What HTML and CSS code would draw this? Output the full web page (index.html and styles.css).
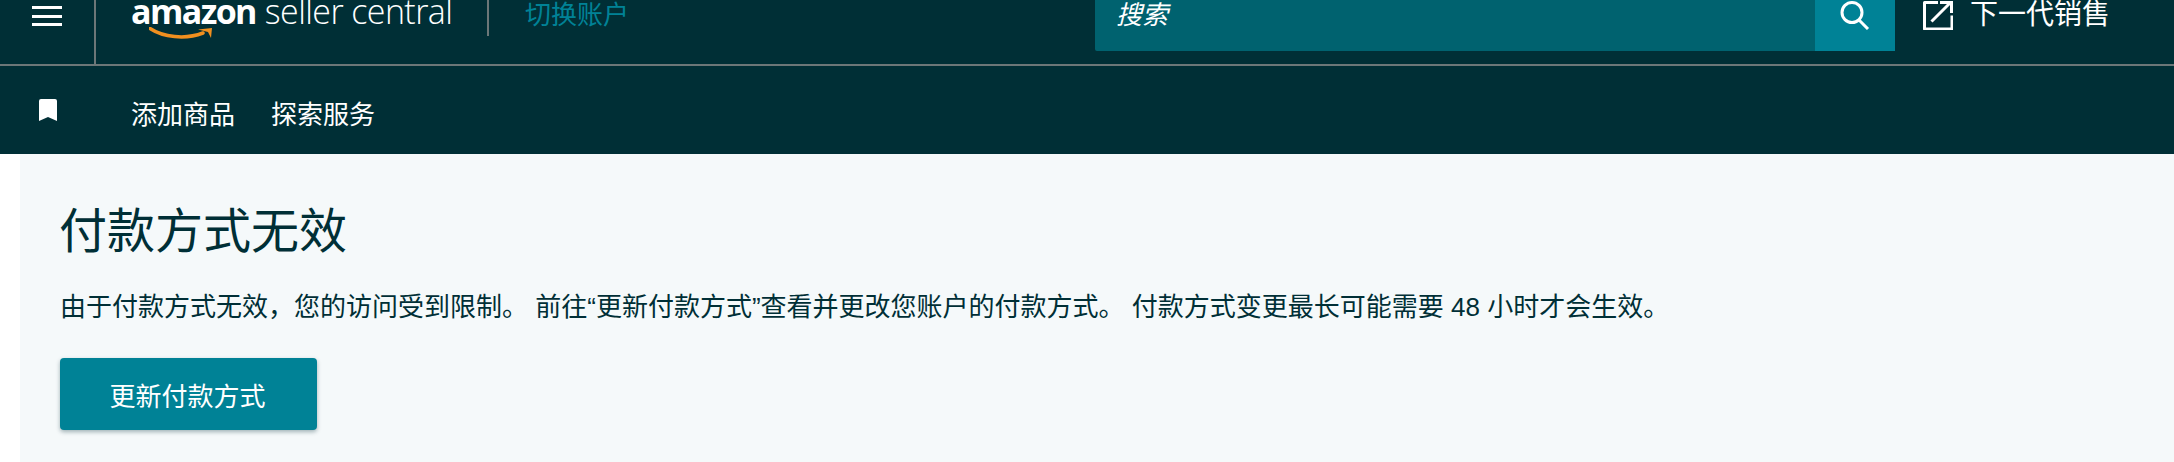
FILE: index.html
```html
<!DOCTYPE html>
<html lang="zh-CN">
<head>
  <title>付款方式无效</title>
  <meta name="viewport" content="width=device-width, initial-scale=1.0">
  <link rel="stylesheet" href="styles.css">
</head>
<body>
  <header class="top-nav">
    <div class="menu-cell">
      <div class="hamburger"><span></span><span></span><span></span></div>
    </div>
    <div class="logo">
      <span class="logo-amazon">amazon</span>
      <span class="logo-seller">seller central</span>
      <svg class="logo-smile" viewBox="0 0 66 14" width="66" height="14">
        <path d="M1 1.500C14 10 36 13 54 6" fill="none" stroke="#f08f1f" stroke-width="3.500" stroke-linecap="round"/>
        <path d="M49 2.500L63 1L62 11L59 5Z" fill="#f08f1f"/>
      </svg>
    </div>
    <div class="switch-account"><a href="#">切换账户</a></div>
    <div class="search-wrap">
      <div class="search-box">搜索</div>
      <button class="search-btn">
        <svg viewBox="0 0 30 30" width="30" height="30">
          <circle cx="12" cy="12.500" r="10" fill="none" stroke="#fff" stroke-width="3"/>
          <path d="M19 20L28 29" fill="none" stroke="#fff" stroke-width="3"/>
        </svg>
      </button>
    </div>
    <a class="next-gen" href="#">
      <svg viewBox="0 0 30 30" width="30" height="30">
        <path d="M15 2.500H1.500V29H29V15.500" fill="none" stroke="#fff" stroke-width="3" stroke-linejoin="round"/>
        <path d="M8.500 21.500L27.500 2.500" fill="none" stroke="#fff" stroke-width="3"/>
        <path d="M17 2.500H28.500V13" fill="none" stroke="#fff" stroke-width="3"/>
      </svg>
      <span>下一代销售</span>
    </a>
  </header>

  <nav class="sub-nav">
    <svg class="bookmark" viewBox="0 0 18 22" width="18" height="22">
      <path d="M2 0H16A2 2 0 0 1 18 2V22L9 18L0 22V2A2 2 0 0 1 2 0Z" fill="#fff"/>
    </svg>
    <a href="#">添加商品</a>
    <a href="#">探索服务</a>
  </nav>

  <main class="content">
    <h1>付款方式无效</h1>
    <p>由于付款方式无效，您的访问受到限制。 前往“更新付款方式”查看并更改您账户的付款方式。 付款方式变更最长可能需要 48 小时才会生效。</p>
    <button class="update-btn">更新付款方式</button>
  </main>
</body>
</html>
```

FILE: styles.css
```css
:root {
  --nav-bg: #002f36;
  --teal: #008296;
  --page-bg: #f5f9fa;
  --divider: #6c7778;
}

* {
  margin: 0;
  padding: 0;
  box-sizing: border-box;
}

body {
  font-family: "Liberation Sans", "Noto Sans CJK SC", sans-serif;
  background: #fff;
  color: var(--nav-bg);
  height: 462px;
  overflow: hidden;
}

a {
  color: inherit;
  text-decoration: none;
}

button {
  font: inherit;
  border: 0;
  cursor: pointer;
}

.top-nav {
  display: flex;
  height: 66px;
  background: var(--nav-bg);
  border-bottom: 2px solid var(--divider);
  color: #fff;
}

.menu-cell {
  width: 96px;
  height: 64px;
  padding: 6px 0 0 32px;
  border-right: 2px solid var(--divider);
}

.hamburger {
  display: flex;
  flex-direction: column;
  justify-content: space-between;
  width: 30px;
  height: 20px;
}

.hamburger span {
  height: 3px;
  background: #fff;
}

.logo {
  position: relative;
  display: flex;
  gap: 9px;
  align-items: baseline;
  width: 356px;
  margin-left: 35px;
  height: 28px;
  font-family: "Open Sans", sans-serif;
  line-height: 23px;
  white-space: nowrap;
}

.logo-amazon {
  font-size: 34px;
  font-weight: 700;
  letter-spacing: -1.6px;
}

.logo-seller {
  font-size: 34px;
  font-weight: 300;
  letter-spacing: -0.6px;
}

.logo-smile {
  position: absolute;
  left: 18px;
  top: 27px;
}

.switch-account {
  flex: 0 0 auto;
  width: 608px;
  height: 36px;
  padding-left: 36px;
  border-left: 2px solid var(--divider);
  color: var(--teal);
  font-size: 26px;
  line-height: 30px;
  white-space: nowrap;
}

.search-wrap {
  display: flex;
  width: 800px;
  height: 51px;
}

.search-box {
  flex: 1;
  padding-left: 21px;
  background: #00626f;
  border-bottom-left-radius: 2px;
  font-size: 26px;
  font-style: italic;
  line-height: 30px;
}

.search-btn {
  display: flex;
  justify-content: center;
  align-items: flex-start;
  width: 80px;
  background: var(--teal);
}

.next-gen {
  display: flex;
  gap: 17px;
  margin-left: 28px;
  font-size: 28px;
  line-height: 30px;
  white-space: nowrap;
}

.sub-nav {
  display: flex;
  align-items: center;
  height: 88px;
  padding-left: 39px;
  background: var(--nav-bg);
  color: #fff;
  font-size: 26px;
}

.sub-nav a {
  margin: 4px 36px 0 0;
}

.bookmark {
  margin-right: 74px;
}

.content {
  height: 308px;
  margin-left: 20px;
  padding: 46px 40px 0;
  background: var(--page-bg);
}

h1 {
  margin-left: -1px;
  font-size: 48px;
  font-weight: 400;
  line-height: 64px;
}

.content p {
  margin-top: 25px;
  font-size: 26px;
  line-height: 36px;
}

.update-btn {
  display: block;
  width: 257px;
  height: 72px;
  margin-top: 33px;
  padding-right: 2px;
  background: var(--teal);
  color: #fff;
  font-size: 26px;
  border-radius: 4px;
  box-shadow: 0 2px 4px rgba(0, 47, 54, 0.35);
}
```
